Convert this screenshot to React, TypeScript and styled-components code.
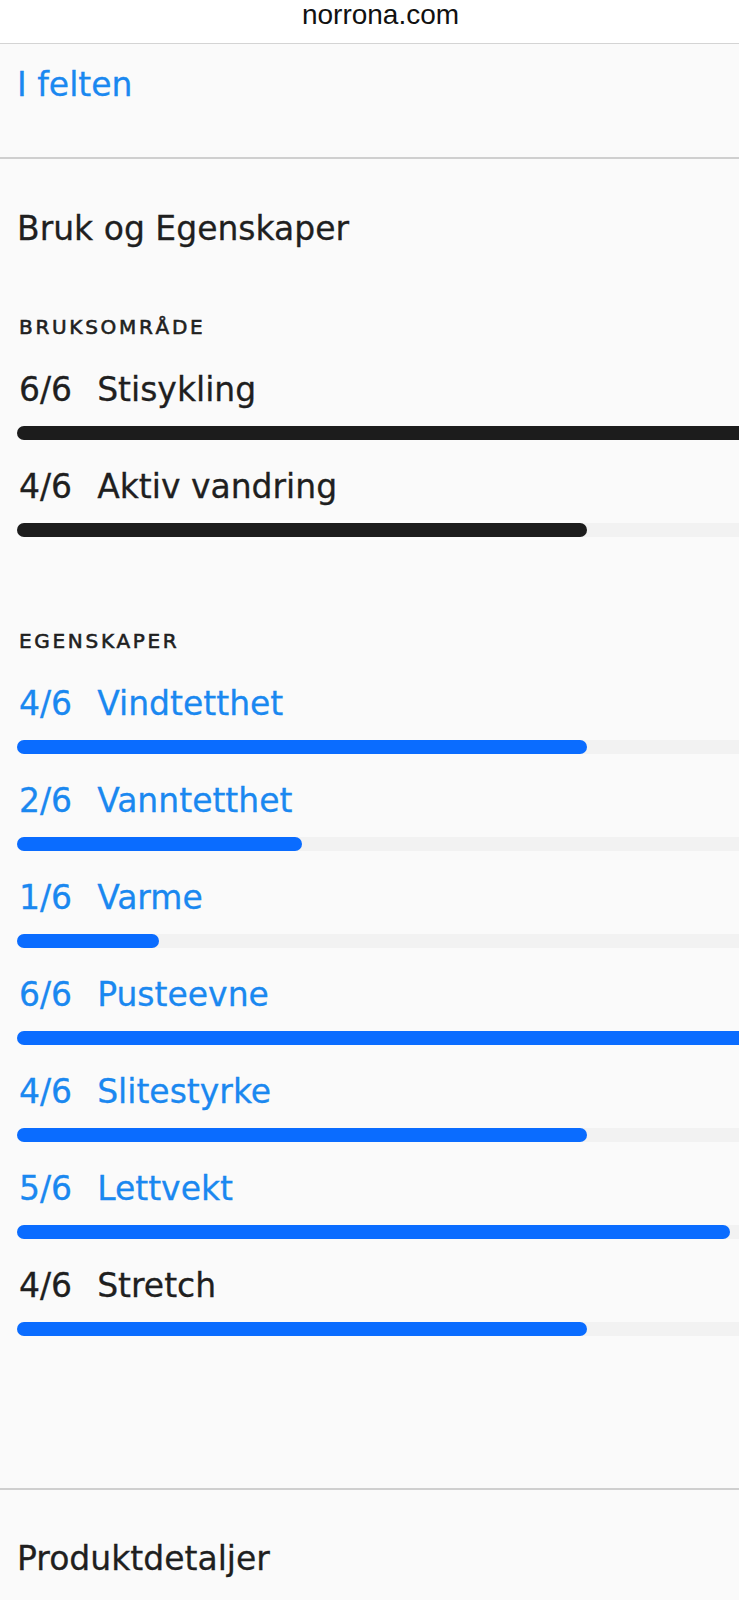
import React, { FC } from 'react';
import styled, { createGlobalStyle } from 'styled-components';

const GlobalStyle = createGlobalStyle`
  html, body {
    margin: 0;
    padding: 0;
    background: #fafafa;
  }

  body {
    overflow-x: hidden;
    font-family: 'DejaVu Sans', 'Noto Sans', sans-serif;
    color: #1f1f1f;
  }
`;

const Page = styled.div`
  width: 739px;
  min-height: 1600px;
  overflow: hidden;
  background: #fafafa;
`;

const AddressBar = styled.div`
  height: 44px;
  padding: 1px 0 0 22px;
  box-sizing: border-box;
  background: #ffffff;
  border-bottom: 1px solid #d4d4d4;
  text-align: center;
  font-family: 'Liberation Sans', Arial, sans-serif;
  font-size: 28px;
  line-height: 28px;
  color: #111;
`;

const Section = styled.section<{ $top: number; $bottom: number }>`
  padding: ${(p) => p.$top}px 17px ${(p) => p.$bottom}px;
  border-bottom: 2px solid #cfcfcf;
`;

const Title = styled.h2<{ $blue?: boolean }>`
  margin: 0;
  font-size: 33px;
  line-height: 40px;
  font-weight: normal;
  -webkit-text-stroke: 0.3px currentColor;
  color: ${(p) => (p.$blue ? '#1a88f0' : '#1f1f1f')};
`;

const GroupLabel = styled.h3`
  margin: 0;
  font-size: 20px;
  line-height: 24px;
  font-weight: normal;
  letter-spacing: 2.7px;
  padding-left: 2px;
  -webkit-text-stroke: 0.6px currentColor;
`;

const Group = styled.div<{ $top: number }>`
  margin-top: ${(p) => p.$top}px;
`;

const Rows = styled.div`
  margin-top: 31px;
  display: flex;
  flex-direction: column;
  gap: 27px;
`;

const Row = styled.div``;

const RowLabel = styled.div<{ $blue?: boolean }>`
  display: flex;
  font-size: 33px;
  line-height: 40px;
  padding-left: 2px;
  -webkit-text-stroke: 0.3px currentColor;
  color: ${(p) => (p.$blue ? '#1a88f0' : '#1f1f1f')};
`;

const Score = styled.span`
  margin-right: 25px;
`;

const Track = styled.div`
  margin-top: 16px;
  width: 855px;
  height: 14px;
  border-radius: 7px;
  background: #f2f2f2;
`;

const Fill = styled.div<{ $blue?: boolean }>`
  height: 100%;
  border-radius: 7px;
  background: ${(p) => (p.$blue ? '#0a6cff' : '#1c1c1c')};
`;

type Rating = { value: number; name: string; blueText?: boolean };

const usage: Rating[] = [
  { value: 6, name: 'Stisykling' },
  { value: 4, name: 'Aktiv vandring' },
];

const features: Rating[] = [
  { value: 4, name: 'Vindtetthet', blueText: true },
  { value: 2, name: 'Vanntetthet', blueText: true },
  { value: 1, name: 'Varme', blueText: true },
  { value: 6, name: 'Pusteevne', blueText: true },
  { value: 4, name: 'Slitestyrke', blueText: true },
  { value: 5, name: 'Lettvekt', blueText: true },
  { value: 4, name: 'Stretch' },
];

const RatingRow: FC<{ item: Rating; blue?: boolean }> = ({ item, blue }) => (
  <Row>
    <RowLabel $blue={item.blueText}>
      <Score>{item.value}/6</Score>
      {item.name}
    </RowLabel>
    <Track>
      <Fill $blue={blue} style={{ width: `${(item.value / 6) * 100}%` }} />
    </Track>
  </Row>
);

const App: FC = () => {
  return (
    <Page>
      <GlobalStyle />
      <AddressBar>norrona.com</AddressBar>
      <Section $top={21} $bottom={52}>
        <Title $blue>I felten</Title>
      </Section>
      <Section $top={50} $bottom={152}>
        <Title>Bruk og Egenskaper</Title>
        <Group $top={66}>
          <GroupLabel>BRUKSOMRÅDE</GroupLabel>
          <Rows>
            {usage.map((item) => (
              <RatingRow key={item.name} item={item} />
            ))}
          </Rows>
        </Group>
        <Group $top={92}>
          <GroupLabel>EGENSKAPER</GroupLabel>
          <Rows>
            {features.map((item) => (
              <RatingRow key={item.name} item={item} blue />
            ))}
          </Rows>
        </Group>
      </Section>
      <Section $top={49} $bottom={40}>
        <Title>Produktdetaljer</Title>
      </Section>
    </Page>
  );
};

export default App;
